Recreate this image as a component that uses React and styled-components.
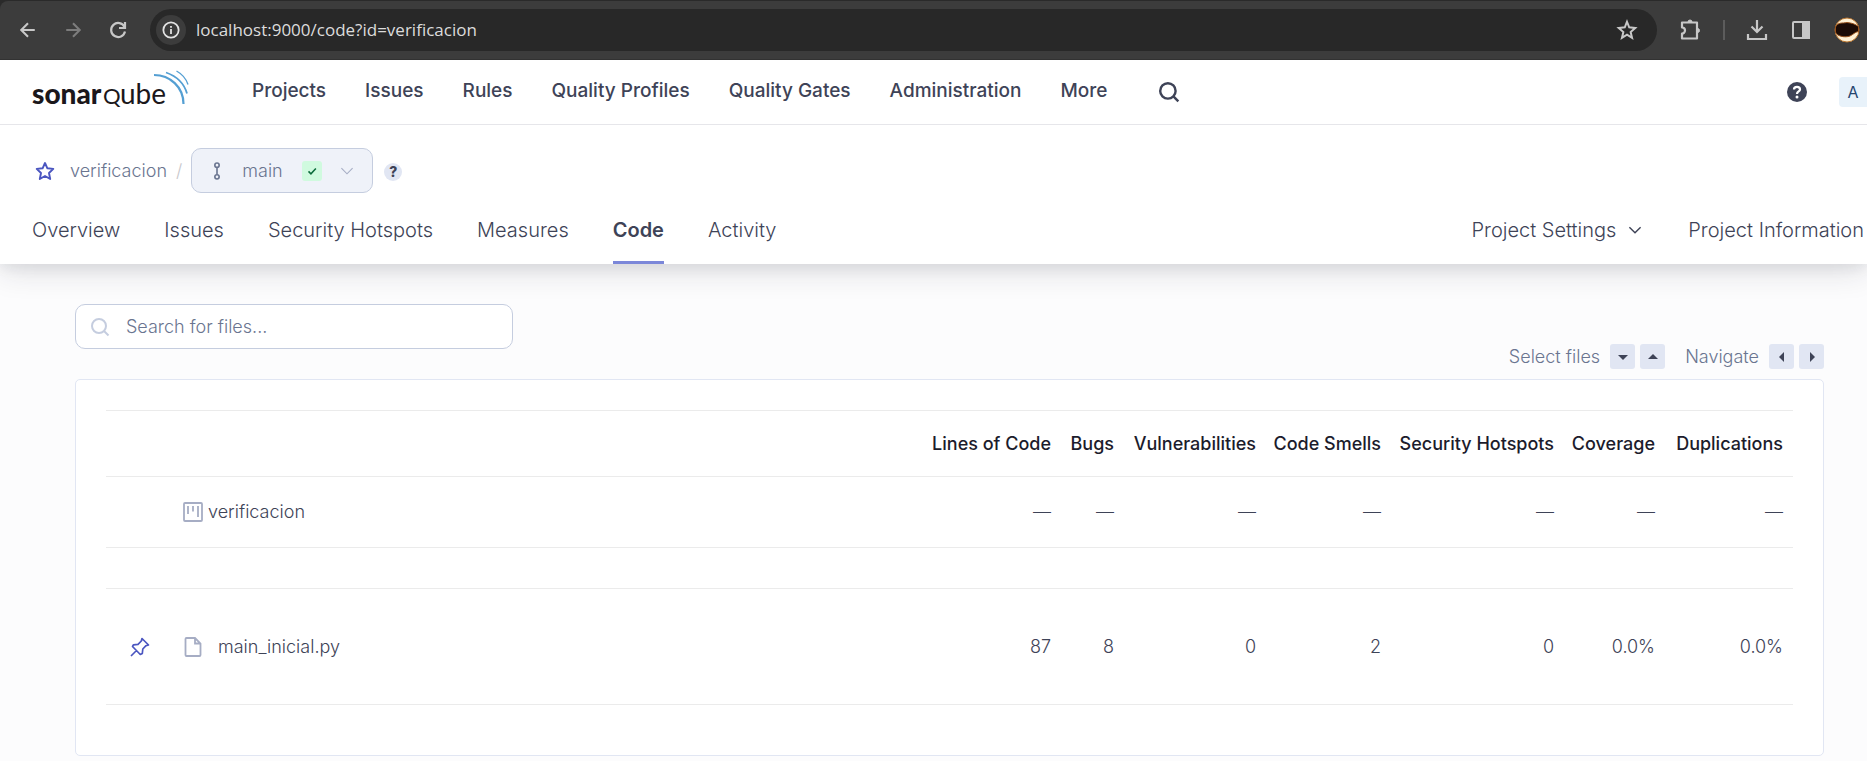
import React from 'react';
import styled, { createGlobalStyle } from 'styled-components';

const Global = createGlobalStyle`
  *, *::before, *::after { box-sizing: border-box; }
  body { margin: 0; background: #fcfcfd; font-family: Inter, "Liberation Sans", sans-serif; color: #3e4357; overflow-x: hidden; }
  button, input { font: inherit; color: inherit; }
  svg { display: block; flex: none; }
  a { color: inherit; text-decoration: none; }
`;

const BrowserFrame = styled.div`background: #2a2a2a; padding-top: 1px;`;
const BrowserBar = styled.div`
  display: flex; align-items: center; height: 59px; padding: 0 6px 0 16px; overflow: hidden;
  background: #3c3c3c; border-bottom: 1px solid #323232; border-top-left-radius: 8px;
`;
const PlainButton = styled.button`
  display: flex; align-items: center; justify-content: center; flex: none;
  width: ${(p) => p.$w || 24}px; height: ${(p) => p.$h || p.$w || 24}px;
  padding: 0; border: 0; background: none; color: ${(p) => p.$c || '#c7c7c7'}; cursor: pointer;
`;
const BrowserNav = styled.div`display: flex; gap: 21px; margin-right: 20px;`;
const Address = styled.div`
  display: flex; align-items: center; flex: 1; min-width: 0; height: 42px;
  border-radius: 21px; background: #282828; padding: 0 16px 0 6px;
`;
const Info = styled(PlainButton)`border-radius: 50%; background: #3c3c3c; color: #e3e3e3;`;
const Url = styled.input`
  flex: 1; min-width: 0; border: 0; outline: 0; background: none; padding: 0; margin-left: 10px;
  font-family: "Open Sans", "Noto Sans", sans-serif; font-size: 17px; line-height: 24px; color: #dcdcdc;
`;
const BrowserTools = styled.div`display: flex; align-items: center; gap: 20px; margin-left: 22px; flex: none;`;
const Split = styled.span`width: 2px; height: 20px; background: #5c5c5c;`;

const Header = styled.header`
  position: relative; z-index: 1; display: flex; align-items: center; height: 65px; padding-left: 32px;
  background: #fff; border-bottom: 1px solid #e6e6ea;
`;
const Brand = styled.a`padding-bottom: 4px;`;
const MainNav = styled.nav`display: flex; align-items: center; gap: 39px; margin-left: 62px; flex: 1;`;
const MainLink = styled.a`font-size: 19px; line-height: 24px; font-weight: 500; padding-bottom: 2px; white-space: nowrap;`;
const Avatar = styled.button`
  width: 28px; height: 30px; border: 0; border-radius: 4px 0 0 4px; background: #e8f2fa;
  font-size: 16px; color: #25456e; padding: 0; margin-left: 30px;
`;

const ProjectHeader = styled.div`
  position: relative; background: #fff; padding: 23px 0 0 32px;
  box-shadow: 0 5px 30px rgba(29, 33, 47, 0.16), 0 2px 14px rgba(29, 33, 47, 0.08);
`;
const Crumbs = styled.div`display: flex; align-items: center; height: 45px; font-size: 18px; line-height: 24px; color: #6a7590; font-weight: 300;`;
const Crumb = styled.a`margin-left: 12px;`;
const Slash = styled.span`margin: 0 9px; color: #c8c8cc;`;
const Branch = styled.button`
  display: flex; align-items: center; height: 45px; width: 182px; padding: 0 16px;
  border: 1px solid #c5cddf; border-radius: 10px; background: #eff2f9; font-weight: 300;
`;
const BranchName = styled.span`margin-left: 16px;`;
const Passed = styled.span`
  display: flex; align-items: center; justify-content: center; width: 20px; height: 20px;
  border-radius: 3px; background: #d0fadf; margin: 0 18px 0 19px;
`;
const HelpDot = styled.button`
  width: 18px; height: 18px; border-radius: 50%; border: 0; padding: 0; margin-left: 11px; margin-top: 3px;
  background: #e1e6f3; color: #3e4357; font-size: 14px; line-height: 18px; font-weight: 800;
`;
const Tabs = styled.nav`display: flex; align-items: flex-start; gap: 44px; margin-top: 23px; height: 48px;`;
const Tab = styled.a`
  height: 48px; font-size: 20px; line-height: 28px; white-space: nowrap;
  font-weight: ${(p) => (p.$on ? 600 : 300)};
  border-bottom: 3px solid ${(p) => (p.$on ? '#7b87d9' : 'transparent')};
`;
const TabEnd = styled.div`display: flex; gap: 46px; margin-left: auto; padding-right: 3px;`;
const TabMenu = styled(PlainButton)`
  width: auto; height: 28px; gap: 12px; font-size: 20px; line-height: 28px; font-weight: 300; color: #3e4357; white-space: nowrap;
`;

const Main = styled.main`padding: 40px 43px 5px 75px;`;
const SearchBox = styled.label`
  display: flex; align-items: center; gap: 16px; width: 438px; height: 45px; padding: 0 14px;
  border: 1px solid #c5cddf; border-radius: 10px; background: #fff; color: #c5cddf;
`;
const SearchInput = styled.input`
  flex: 1; min-width: 0; border: 0; outline: 0; padding: 0; background: none; font-size: 18px; line-height: 24px; font-weight: 300;
  &::placeholder { color: #6a7590; opacity: 1; }
`;
const Keys = styled.div`
  display: flex; align-items: center; justify-content: flex-end; gap: 5px; margin: -5px 0 10px;
  font-size: 18px; line-height: 25px; color: #6a7590; font-weight: 300;
`;
const KeyLabel = styled.span`margin: 0 5px 0 15px;`;
const Key = styled.kbd`
  display: flex; align-items: center; justify-content: center; width: 25px; height: 25px; border-radius: 3px; background: #e1e6f3; color: #3e4357;
`;
const Card = styled.section`border: 1px solid #e1e6f3; border-radius: 5px; background: #fff; padding: 30px;`;
const Table = styled.table`
  width: 100%; table-layout: fixed; border-collapse: collapse; font-size: 18px; line-height: 24px; margin-bottom: 20px;
`;
const Row = styled.tr`height: ${(p) => p.$h}px; border-top: 1px solid #ebebeb; border-bottom: 1px solid #ebebeb;`;
const Head = styled.th`padding: 0 10px 0 0; text-align: right; font-weight: 500; color: #1c1c2c; white-space: nowrap;`;
const Cell = styled.td`padding: 0 10px; text-align: ${(p) => (p.$left ? 'left' : 'right')}; font-weight: 300; white-space: nowrap;`;
const Name = styled.a`display: flex; align-items: center; gap: ${(p) => p.$gap}px;`;
const Col = styled.col`width: ${(p) => p.$w}px;`;

const columns = [
  ['Lines of Code', 135], ['Bugs', 63], ['Vulnerabilities', 142], ['Code Smells', 125],
  ['Security Hotspots', 173], ['Coverage', 101], ['Duplications', 128],
];
const values = ['87', '8', '0', '2', '0', '0.0%', '0.0%'];

const Stroke = ({ d, s = 20, w = 2, box = 20, children, ...rest }) => (
  <svg width={s} height={s} viewBox={`0 0 ${box} ${box}`} fill="none" stroke="currentColor" strokeWidth={w} {...rest}>
    {d && <path d={d} />}
    {children}
  </svg>
);
const Caret = ({ d }) => <svg width="10" height="10" viewBox="0 0 10 10" fill="currentColor"><path d={d} /></svg>;

const Logo = () => (
  <svg width="158" height="42" viewBox="0 0 158 42" role="img" aria-label="sonarqube">
    <g fill="#1b171b" fontFamily="Lato, sans-serif">
      <text x="0" y="35" fontSize="28" fontWeight="900">sonar</text>
      <text x="71" y="35" fontSize="22">Q</text>
      <text x="88" y="35" fontSize="28">ube</text>
    </g>
    <g fill="none" stroke="#549fd3">
      <path d="M122 6 C138 6 151.500 18 151.500 35" strokeWidth="2.200" />
      <path d="M134 3.500 C144 7 152 14 155 24.500" strokeWidth="1.800" />
      <path d="M144.500 2 C150 5 154 9.500 156 15.500" strokeWidth="1.400" />
    </g>
  </svg>
);

export default function App() {
  return (
    <>
      <Global />
      <BrowserFrame>
        <BrowserBar>
          <BrowserNav>
            <PlainButton aria-label="Back"><Stroke d="M17.500 10H3M10 2.500L2.500 10L10 17.500" s={18} w={2.300} /></PlainButton>
            <PlainButton aria-label="Forward" $c="#7c7c7c"><Stroke d="M2.500 10H17M10 2.500L17.500 10L10 17.500" s={18} w={2.300} /></PlainButton>
            <PlainButton aria-label="Reload"><Stroke d="M16.500 7A7 7 0 1 0 17 11.500M17 2V8H11" s={20} w={2.200} /></PlainButton>
          </BrowserNav>
          <Address>
            <Info $w={30} aria-label="Site information">
              <Stroke s={18}><circle cx="10" cy="10" r="8.500" /><path d="M10 9V14.500M10 5.500V7.500" /></Stroke>
            </Info>
            <Url aria-label="Address" defaultValue="localhost:9000/code?id=verificacion" />
            <PlainButton $w={28} aria-label="Bookmark"><Stroke d="M10 2.500L12 7.600L17.500 8.100L13.300 11.800L14.600 17.200L10 14.300L5.400 17.200L6.700 11.800L2.500 8.100L8 7.600Z" s={22} w={1.800} /></PlainButton>
          </Address>
          <BrowserTools>
            <PlainButton aria-label="Extensions"><Stroke d="M3 4.500H18V20.500H3V15.500A3 3 0 0 0 3 9.500Z" s={24} box={24} w={2.200} strokeLinejoin="round"><path d="M9 4A1.800 1.800 0 0 1 13 4ZM18.500 10.500A2 2 0 0 1 18.500 14.500Z" fill="currentColor" strokeWidth="1" /></Stroke></PlainButton>
            <Split />
            <PlainButton aria-label="Downloads"><Stroke d="M12 2V14M6.500 8.500L12 14L17.500 8.500M3 16V21H21V16" s={24} box={24} w={2.200} /></PlainButton>
            <PlainButton aria-label="Side panel"><Stroke s={20}><rect x="2" y="2" width="16" height="16" rx="1" /><path d="M12 2H18V18H12Z" fill="currentColor" /></Stroke></PlainButton>
            <PlainButton $w={28} aria-label="Profile">
              <svg width="26" height="26" viewBox="0 0 26 26"><circle cx="13" cy="13" r="12" fill="#fff1d4" stroke="#b87531" /><path d="M1.500 10C4 5 8 6.500 13 5.500C18 6 21 7 24.500 9.500V14.500C21 15 20 17 16 19C11 21 2 19 1.500 15Z" fill="#1b0b05" stroke="#98511b" /></svg>
            </PlainButton>
          </BrowserTools>
        </BrowserBar>
      </BrowserFrame>

      <Header>
        <Brand href="#home"><Logo /></Brand>
        <MainNav aria-label="Main">
          {['Projects', 'Issues', 'Rules', 'Quality Profiles', 'Quality Gates', 'Administration', 'More'].map((t) => (
            <MainLink key={t} href="#nav">{t}</MainLink>
          ))}
          <PlainButton $w={46} $h={24} $c="#3e4357" aria-label="Search"><Stroke s={22} w={2.200}><circle cx="9" cy="9" r="7" /><path d="M14 14L18.500 18.500" /></Stroke></PlainButton>
        </MainNav>
        <PlainButton $c="#3e4357" aria-label="Help">
          <svg width="20" height="20" viewBox="0 0 20 20"><circle cx="10" cy="10" r="10" fill="currentColor" /><path d="M7 7.500C7 4 13 4 13 7.500C13 9.500 10 9.500 10 12" fill="none" stroke="#fff" strokeWidth="2.200" /><circle cx="10" cy="15" r="1.500" fill="#fff" /></svg>
        </PlainButton>
        <Avatar>A</Avatar>
      </Header>

      <ProjectHeader>
        <Crumbs>
          <PlainButton $w={26} $h={24} $c="#4b56c0" aria-label="Favorite"><Stroke d="M10 2L12.400 7.300L18.300 7.900L14 12L15.200 18L10 15L4.800 18L6 12L1.700 7.900L7.600 7.300Z" s={20} w={1.900} strokeLinejoin="round" /></PlainButton>
          <Crumb href="#project">verificacion</Crumb>
          <Slash>/</Slash>
          <Branch>
            <Stroke s={18} w={1.800}><circle cx="10" cy="3.500" r="2.400" /><circle cx="10" cy="16.500" r="2.400" /><path d="M10 6V14" /></Stroke>
            <BranchName>main</BranchName>
            <Passed><Stroke d="M5 10.500L8.500 14L15.500 6.500" s={14} w={2.200} color="#0c6b3c" /></Passed>
            <Stroke d="M2 6L10 14L18 6" s={14} w={1.600} color="#a6adc4" />
          </Branch>
          <HelpDot>?</HelpDot>
        </Crumbs>
        <Tabs aria-label="Project">
          {['Overview', 'Issues', 'Security Hotspots', 'Measures', 'Code', 'Activity'].map((t) => (
            <Tab key={t} href="#tab" $on={t === 'Code'}>{t}</Tab>
          ))}
          <TabEnd>
            <TabMenu>Project Settings<Stroke d="M2 6L10 14L18 6" s={14} w={2} /></TabMenu>
            <Tab href="#info">Project Information</Tab>
          </TabEnd>
        </Tabs>
      </ProjectHeader>

      <Main>
        <SearchBox>
          <Stroke s={20} w={2}><circle cx="9" cy="9" r="7" /><path d="M14 14L18.500 18.500" /></Stroke>
          <SearchInput aria-label="Search for files" placeholder="Search for files..." />
        </SearchBox>
        <Keys>
          <KeyLabel>Select files</KeyLabel>
          <Key><Caret d="M0 3H10L5 8Z" /></Key>
          <Key><Caret d="M0 7H10L5 2Z" /></Key>
          <KeyLabel>Navigate</KeyLabel>
          <Key><Caret d="M7 0V10L2 5Z" /></Key>
          <Key><Caret d="M3 0V10L8 5Z" /></Key>
        </Keys>
        <Card>
          <Table>
            <colgroup>
              <Col $w={67} /><col />
              {columns.map(([t, w]) => <Col key={t} $w={w} />)}
            </colgroup>
            <thead>
              <Row $h={66}><Cell /><Cell />{columns.map(([t]) => <Head key={t} scope="col">{t}</Head>)}</Row>
            </thead>
            <tbody>
              <Row $h={71}>
                <Cell />
                <Cell $left>
                  <Name href="#root" $gap={5}>
                    <Stroke s={20} w={1.800} color="#a6adc4"><rect x="1" y="1" width="18" height="18" rx="1" /><path d="M5 4V12M10 4V9.500M15 4V15" /></Stroke>
                    verificacion
                  </Name>
                </Cell>
                {columns.map(([t]) => <Cell key={t}>—</Cell>)}
              </Row>
              <Row $h={41}><Cell colSpan={9} /></Row>
              <Row $h={116}>
                <Cell $left>
                  <PlainButton $c="#4b56c0" $w={47} $h={24} aria-label="Pin file">
                    <Stroke s={20} w={1.700} strokeLinejoin="round" d="M12 1.500L18.500 8L16 8.700L12.800 12L12.300 16.500L10.300 17.500L2.500 9.500L3.500 7.800L8 7.300L11.300 4ZM6.500 13.500L1 19" />
                  </PlainButton>
                </Cell>
                <Cell $left>
                  <Name href="#file" $gap={15}>
                    <Stroke s={20} w={1.800} color="#a6adc4"><path d="M3.500 1H12L17.500 6.500V18Q17.500 19 16.500 19H3.500Q2.500 19 2.500 18V2Q2.500 1 3.500 1ZM12 1V6.500H17.500" /></Stroke>
                    main_inicial.py
                  </Name>
                </Cell>
                {values.map((v, i) => <Cell key={columns[i][0]}>{v}</Cell>)}
              </Row>
            </tbody>
          </Table>
        </Card>
      </Main>
    </>
  );
}
